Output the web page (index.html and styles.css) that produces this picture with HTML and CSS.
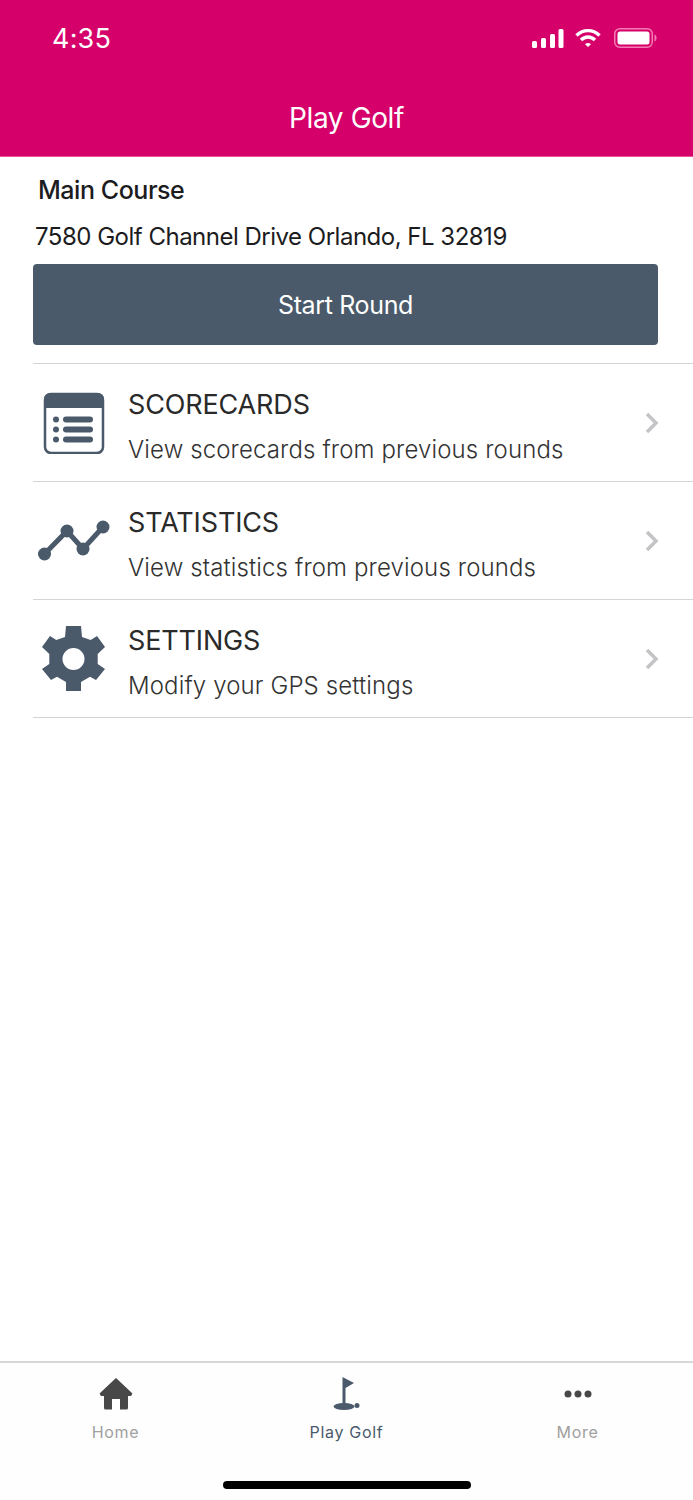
FILE: index.html

```html
<!DOCTYPE html>
<html lang="en">
<head>
  <meta charset="UTF-8" />
  <title>Play Golf</title>
  <link rel="stylesheet" href="styles.css">
</head>
<body>
  <div class="app">
    <header class="top">
      <div class="status">
        <span class="time">4:35</span>
        <div class="status-icons">
          <svg class="signal" width="32" height="19" viewBox="0 0 32 19" fill="#fff">
            <rect x="0" y="12" width="5" height="7" rx="1.5"/>
            <rect x="9" y="9" width="5" height="10" rx="1.5"/>
            <rect x="18" y="5" width="5" height="14" rx="1.5"/>
            <rect x="26.500" y="0" width="5" height="19" rx="1.500"/>
          </svg>
          <svg width="26" height="20" viewBox="0 0 26 20" fill="none" stroke="#fff" stroke-width="3.400">
            <path d="M1.500 7.500C8 1 18 1 24.500 7.500"/>
            <path d="M6 12c4-4 10-4 14 0"/>
            <path d="M10 16.200c1.800-1.700 4.200-1.700 6 0L13 19z" fill="#fff" stroke="none"/>
          </svg>
          <svg class="battery" width="43" height="20" viewBox="0 0 43 20">
            <rect x="0.750" y="0.750" width="37.500" height="18.500" rx="5" fill="none" stroke="#f27cb4" stroke-width="1.500"/>
            <rect x="3.500" y="3.500" width="32" height="13" rx="2.500" fill="#fff"/>
            <path d="M40.500 6.500c1.600.6 2 2 2 3.500s-.4 2.900-2 3.500z" fill="#f27cb4"/>
          </svg>
        </div>
      </div>
      <h1 class="title">Play Golf</h1>
    </header>

    <main class="content">
      <section class="course">
        <div class="course-name">Main Course</div>
        <div class="course-address">7580 Golf Channel Drive Orlando, FL 32819</div>
        <button class="start-btn">Start Round</button>
      </section>

      <ul class="menu">
        <li class="menu-row">
          <div class="menu-icon">
            <svg width="62" height="62" viewBox="0 0 62 62">
              <rect x="2" y="2" width="58" height="59" rx="6" fill="none" stroke="#4a5a6b" stroke-width="2.500"/>
              <path d="M1 16V7a6 6 0 0 1 6-6h48a6 6 0 0 1 6 6v9z" fill="#4a5a6b"/>
              <circle cx="13" cy="27.500" r="3" fill="#4a5a6b"/>
              <circle cx="13" cy="37.500" r="3" fill="#4a5a6b"/>
              <circle cx="13" cy="47.500" r="3" fill="#4a5a6b"/>
              <rect x="20" y="24.500" width="30" height="6" rx="3" fill="#4a5a6b"/>
              <rect x="20" y="34.500" width="30" height="6" rx="3" fill="#4a5a6b"/>
              <rect x="20" y="44.500" width="30" height="6" rx="3" fill="#4a5a6b"/>
            </svg>
          </div>
          <div class="menu-text">
            <div class="menu-title">SCORECARDS</div>
            <div class="menu-sub">View scorecards from previous rounds</div>
          </div>
          <svg class="chevron" width="14" height="22" viewBox="0 0 14 22" fill="none" stroke="#c4c4c6" stroke-width="3.500"><path d="M2 2l9 9-9 9"/></svg>
        </li>
        <li class="menu-row">
          <div class="menu-icon">
            <svg width="74" height="42" viewBox="0 0 74 42" fill="#4a5a6b" stroke="#4a5a6b">
              <path d="M7.500 34L30 11 46 29 66 7" fill="none" stroke-width="5"/>
              <circle cx="7.500" cy="34" r="6.500" stroke="none"/>
              <circle cx="30" cy="11" r="6.500" stroke="none"/>
              <circle cx="46" cy="29" r="6.500" stroke="none"/>
              <circle cx="66" cy="7" r="6.500" stroke="none"/>
            </svg>
          </div>
          <div class="menu-text">
            <div class="menu-title">STATISTICS</div>
            <div class="menu-sub">View statistics from previous rounds</div>
          </div>
          <svg class="chevron" width="14" height="22" viewBox="0 0 14 22" fill="none" stroke="#c4c4c6" stroke-width="3.500"><path d="M2 2l9 9-9 9"/></svg>
        </li>
        <li class="menu-row">
          <div class="menu-icon">
            <svg width="67" height="66" viewBox="0 0 67 66">
              <path fill="#4a5a6b" fill-rule="evenodd" d="M26 0h15l1 11 8.700 3L57 10l8 11-7.300 7v10l7.300 5-9 11-6-3.300L41 56v9H26v-9l-9-5.300L11 54 2 43l7.300-5V28L2 21l8-11 6.300 4 8.700-3zM33.500 22a11 11 0 1 0 0 22 11 11 0 0 0 0-22z"/>
            </svg>
          </div>
          <div class="menu-text">
            <div class="menu-title">SETTINGS</div>
            <div class="menu-sub">Modify your GPS settings</div>
          </div>
          <svg class="chevron" width="14" height="22" viewBox="0 0 14 22" fill="none" stroke="#c4c4c6" stroke-width="3.500"><path d="M2 2l9 9-9 9"/></svg>
        </li>
      </ul>
    </main>

    <nav class="tabs">
      <div class="tab-row">
        <div class="tab">
          <svg width="34" height="34" viewBox="0 0 34 34" fill="#484848">
            <path d="M17 1L33.500 16.500 32 19h-3v12a1.500 1.500 0 0 1-1.500 1.500H21V22h-8v10.500H6.500A1.500 1.500 0 0 1 5 31V19H2L.5 16.500z"/>
          </svg>
          <span>Home</span>
        </div>
        <div class="tab active">
          <svg class="flag" width="30" height="34" viewBox="0 0 30 34" fill="#4a5a6b">
            <path d="M12.500 0l11.500 6-8.500 5v17h-3z"/>
            <ellipse cx="14" cy="29.500" rx="10.500" ry="3.500"/>
            <circle cx="27" cy="28.500" r="2.500"/>
          </svg>
          <span>Play Golf</span>
        </div>
        <div class="tab">
          <svg width="30" height="34" viewBox="0 0 30 34" fill="#484848">
            <circle cx="5" cy="17" r="3.500"/>
            <circle cx="15" cy="17" r="3.500"/>
            <circle cx="25" cy="17" r="3.500"/>
          </svg>
          <span>More</span>
        </div>
      </div>
      <div class="home-bar"></div>
    </nav>
  </div>
</body>
</html>
```

FILE: styles.css

```css
* {
  box-sizing: border-box;
}

body {
  margin: 0;
  font-family: Inter, 'Liberation Sans', sans-serif;
  background: #fff;
  color: #222;
}

.app {
  display: flex;
  flex-direction: column;
  height: 1500px;
}

.top {
  height: 157px;
  background: #d6006a;
  color: #fff;
  padding: 22px 36px 0 52px;
  border-bottom: 1px solid #e8589b;
}

.status {
  display: flex;
  justify-content: space-between;
  align-items: center;
  height: 32px;
}

.time {
  font-size: 27px;
  letter-spacing: 0.2px;
}

.status-icons {
  display: flex;
  align-items: center;
  gap: 13px;
}

.signal {
  margin-right: -2px;
}

.title {
  margin: 44px 0 0 -16px;
  font-size: 28px;
  font-weight: 400;
  text-align: center;
  line-height: 40px;
  letter-spacing: -0.4px;
}

.content {
  flex: 1;
}

.course {
  padding: 15px 35px 0 33px;
}

.course-name {
  font-size: 25px;
  font-weight: 500;
  line-height: 36px;
  padding-left: 5px;
  color: #1c1c1e;
  letter-spacing: -0.45px;
}

.course-address {
  font-size: 24px;
  line-height: 36px;
  margin-top: 11px;
  padding-left: 2px;
  color: #1c1c1e;
  letter-spacing: -0.5px;
}

.start-btn {
  display: block;
  width: 100%;
  height: 81px;
  margin-top: 9px;
  background: #4a5a6b;
  border: none;
  border-radius: 4px;
  color: #fff;
  font-family: inherit;
  font-size: 25px;
  letter-spacing: -0.35px;
}

.menu {
  list-style: none;
  margin: 18px 0 0 33px;
  padding: 0;
  border-top: 1px solid #d4d4d4;
}

.menu-row {
  display: flex;
  align-items: center;
  height: 118px;
  border-bottom: 1px solid #d4d4d4;
  padding-right: 34px;
  padding-top: 7px;
}

.chevron {
  margin-top: -7px;
}

.menu-icon {
  flex: 0 0 95px;
  display: flex;
  justify-content: center;
  padding-right: 14px;
  margin-top: -7px;
}

.menu-text {
  flex: 1;
}

.menu-title {
  font-size: 27px;
  line-height: 40px;
  color: #2a2a2a;
  letter-spacing: -0.15px;
}

.menu-sub {
  font-size: 24px;
  font-weight: 300;
  line-height: 36px;
  margin-top: 7px;
  color: #333;
  letter-spacing: 0.13px;
}

.tabs {
  height: 139px;
  border-top: 2px solid #d8d8d8;
  background: #fefefe;
}

.tab-row {
  display: grid;
  grid-template-columns: repeat(3, 1fr);
  height: 118px;
}

.tab {
  display: flex;
  flex-direction: column;
  align-items: center;
  padding-top: 14px;
  gap: 11px;
  color: #a0a0a0;
  font-size: 16px;
  letter-spacing: 0.7px;
}

.tab.active {
  color: #4a5a6b;
}

.flag {
  margin-left: -3px;
}

.home-bar {
  width: 248px;
  height: 8px;
  margin-left: 223px;
  background: #000;
  border-radius: 4px;
}
```
